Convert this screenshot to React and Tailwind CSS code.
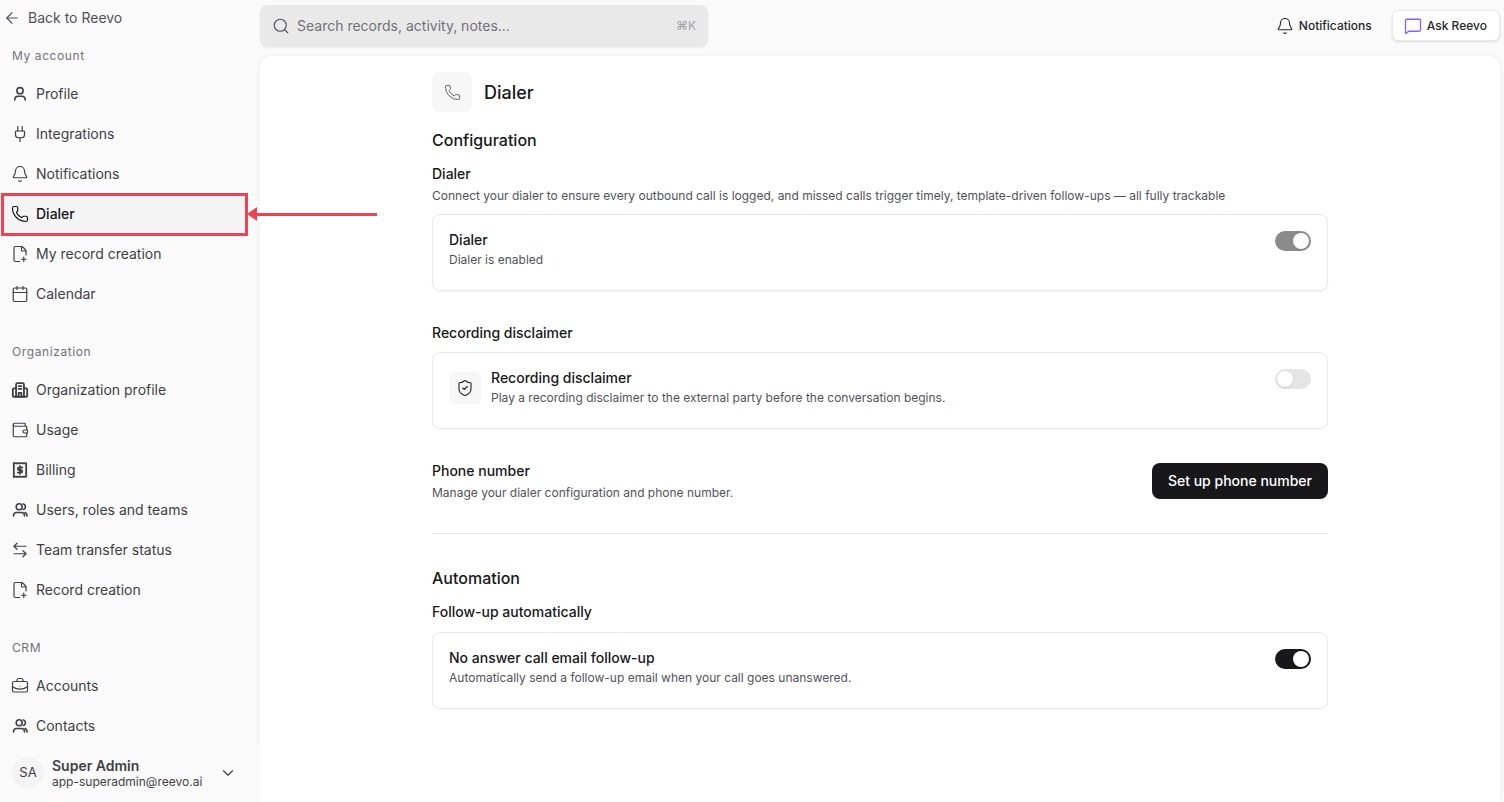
import {
  ArrowLeft, Bell, BriefcaseBusiness, Calendar, ChevronDown, FilePlusCorner, Phone, Plug,
  Search, ShieldCheck, Wallet, ArrowLeftRight, MessageSquare,
} from 'lucide-react'

const OrgIcon = (props) => (
  <svg viewBox="0 0 16 16" fill="none" stroke="currentColor" strokeWidth="1.2" strokeLinecap="round" strokeLinejoin="round" {...props}>
    <path d="M4.5 14V3a1.2 1.2 0 0 1 1.2-1.2h4.6A1.2 1.2 0 0 1 11.5 3v11" />
    <path d="M4.5 6.5H2.6a1 1 0 0 0-1 1V13a1 1 0 0 0 1 1h10.8a1 1 0 0 0 1-1V7.5a1 1 0 0 0-1-1h-1.9" />
    <path d="M6.8 4.5h2.4M6.8 7h2.4M6.8 14v-3.5h2.4V14" />
  </svg>
)

const BillIcon = (props) => (
  <svg viewBox="0 0 16 16" fill="none" stroke="currentColor" strokeWidth="1.2" strokeLinecap="round" strokeLinejoin="round" {...props}>
    <path d="M2.5 2v12M13.5 2v12" />
    <path d="M2.5 2h11M2.5 14h11" strokeDasharray="1 1.2" />
    <path d="M10 5.7H7.2a1.1 1.1 0 0 0 0 2.3h1.6a1.1 1.1 0 0 1 0 2.3H6M8 4.6v6.8" />
  </svg>
)

const PersonIcon = (props) => (
  <svg viewBox="0 0 18 18" fill="none" stroke="currentColor" strokeWidth="1.25" strokeLinecap="round" strokeLinejoin="round" {...props}>
    <circle cx="9" cy="5.7" r="3.1" />
    <path d="M3.8 15v-.5a3.3 3.3 0 0 1 3.3-3.3h3.8a3.3 3.3 0 0 1 3.3 3.3v.5" />
  </svg>
)

const PeopleIcon = (props) => (
  <svg viewBox="0 0 18 18" fill="none" stroke="currentColor" strokeWidth="1.25" strokeLinecap="round" strokeLinejoin="round" {...props}>
    <circle cx="8.2" cy="5.7" r="3" />
    <path d="M2.5 15v-.5a3 3 0 0 1 3-3h5a3 3 0 0 1 3 3v.5" />
    <path d="M12.5 2.9a3 3 0 0 1 0 5.6M16 15v-.6a3 3 0 0 0-2-2.8" />
  </svg>
)

const sections = [
  {
    title: 'My account',
    items: [
      { label: 'Profile', icon: PersonIcon },
      { label: 'Integrations', icon: Plug },
      { label: 'Notifications', icon: Bell },
      { label: 'Dialer', icon: Phone, active: true },
      { label: 'My record creation', icon: FilePlusCorner },
      { label: 'Calendar', icon: Calendar },
    ],
  },
  {
    title: 'Organization',
    items: [
      { label: 'Organization profile', icon: OrgIcon },
      { label: 'Usage', icon: Wallet },
      { label: 'Billing', icon: BillIcon },
      { label: 'Users, roles and teams', icon: PeopleIcon },
      { label: 'Team transfer status', icon: ArrowLeftRight },
      { label: 'Record creation', icon: FilePlusCorner },
    ],
  },
  {
    title: 'CRM',
    items: [
      { label: 'Accounts', icon: BriefcaseBusiness },
      { label: 'Contacts', icon: PeopleIcon },
    ],
  },
]

const NavItem = ({ label, icon: Icon, active }) => (
  <div className={active
    ? 'mr-3 flex h-10 items-center gap-[7px] bg-[#f4f4f5] pl-[11px] text-sm font-medium text-[#18181b]'
    : 'mr-3 flex h-10 items-center gap-[7px] pl-[11px] text-sm text-[#3f3f46]'}>
    <Icon className="size-[18px] shrink-0" strokeWidth={1.6} />
    <span>{label}</span>
  </div>
)

const Toggle = ({ state }) => {
  if (state === 'off') {
    return (
      <div className="flex h-5 w-9 items-center rounded-full bg-[#e5e5e5] p-0.5">
        <div className="size-4 rounded-full bg-white shadow" />
      </div>
    )
  }
  return (
    <div className={state === 'dim'
      ? 'flex h-5 w-9 items-center justify-end rounded-full bg-[#8b8b8b] p-0.5'
      : 'flex h-5 w-9 items-center justify-end rounded-full bg-[#18181b] p-0.5'}>
      <div className="size-4 rounded-full bg-white shadow" />
    </div>
  )
}

const SettingCard = ({ title, text, toggle, icon }) => (
  <div className="flex h-[77px] items-start justify-between rounded-lg border border-[#e8e8e8] px-4 pt-4 shadow-[0_1px_2px_rgba(0,0,0,0.04)]">
    <div className="flex items-start gap-2.5">
      {icon}
      <div>
        <div className="text-sm leading-[18px] font-medium text-[#18181b]">{title}</div>
        <div className="mt-[3px] text-xs leading-4 text-[#52525b]">{text}</div>
      </div>
    </div>
    <Toggle state={toggle} />
  </div>
)

const App = () => {
  return (
    <div className="flex h-screen overflow-hidden bg-[#fafafa] font-['Inter',sans-serif]">
      <aside className="relative flex h-full w-[260px] shrink-0 flex-col">
        <div className="flex h-[38px] items-start pt-[9px] pl-[3px] text-sm leading-[18px] text-[#52525b]">
          <ArrowLeft className="mr-[7px] size-[18px]" strokeWidth={1.5} />
          Back to Reevo
        </div>
        <nav className="min-h-0 flex-1 overflow-hidden">
          {sections.map((section) => (
            <div key={section.title} className="mb-5">
              <div className="flex h-9 items-center pl-3 text-xs tracking-wider text-[#71717a]">{section.title}</div>
              {section.items.map((item) => (
                <NavItem key={item.label} {...item} />
              ))}
            </div>
          ))}
        </nav>
        <div className="absolute right-0 bottom-0 left-0 flex h-[58px] items-center bg-[#fafafa] pr-[23px] pl-3">
          <div className="flex size-8 items-center justify-center rounded-full bg-[#f4f4f5] text-[13px] text-[#3f3f46]">SA</div>
          <div className="ml-2 min-w-0 flex-1">
            <div className="text-sm leading-[17px] font-semibold text-[#3f3f46]">Super Admin</div>
            <div className="text-xs leading-[15px] text-[#3f3f46]">app-superadmin@reevo.ai</div>
          </div>
          <ChevronDown className="size-[18px] text-[#3f3f46]" strokeWidth={1.5} />
        </div>
        {/* red annotation from the docs screenshot */}
        <div className="absolute top-[193px] left-[1px] h-[43px] w-[247px] border-[3px] border-[#ef4354]" />
        <div className="absolute top-[212.5px] left-[252px] h-[3px] w-[125px] bg-[#ef4354]" />
        <div className="absolute top-[207px] left-[247px] h-0 w-0 border-y-[7px] border-r-[10px] border-y-transparent border-r-[#ef4354]" />
      </aside>

      <div className="flex h-full min-w-0 flex-1 flex-col pr-1">
        <header className="flex h-14 shrink-0 items-start justify-between pt-[5px]">
          <div className="flex h-[42px] w-[448px] items-center rounded-lg bg-[#e9e9e9] pr-3 pl-3 shadow-[0_1px_2px_rgba(0,0,0,0.06)]">
            <Search className="size-[18px] text-[#52525b]" strokeWidth={1.5} />
            <span className="ml-[7px] flex-1 text-sm text-[#71717a]">Search records, activity, notes...</span>
            <span className="text-xs text-[#a1a1aa]">⌘K</span>
          </div>
          <div className="flex items-center gap-5 pt-[5px]">
            <div className="flex items-center gap-[5px] text-xs font-medium text-[#27272a]">
              <Bell className="size-[18px]" strokeWidth={1.5} />
              Notifications
            </div>
            <div className="flex h-[31px] items-center gap-[5px] rounded-md border border-[#e8e8e8] bg-white pr-3 pl-[11px] text-xs font-medium text-[#27272a] shadow-sm">
              <MessageSquare className="size-[18px] text-[#8b5cf6]" strokeWidth={1.75} />
              Ask Reevo
            </div>
          </div>
        </header>

        <main className="min-h-0 flex-1 rounded-t-xl bg-white shadow-[0_0_6px_rgba(0,0,0,0.05)]">
          <div className="mx-auto max-w-4xl pt-4">
            <div className="flex items-center gap-3">
              <div className="flex size-10 items-center justify-center rounded-lg bg-[#f7f7f7] text-[#52525b]">
                <Phone className="size-[17px]" strokeWidth={1.25} />
              </div>
              <h1 className="mt-0.5 text-lg font-medium text-[#18181b]">Dialer</h1>
            </div>

            <h2 className="mt-4 text-base leading-6 font-medium text-[#18181b]">Configuration</h2>
            <h3 className="mt-[13px] text-sm leading-[18px] font-medium text-[#18181b]">Dialer</h3>
            <p className="mt-[5px] text-xs leading-4 text-[#52525b]">
              Connect your dialer to ensure every outbound call is logged, and missed calls trigger timely, template-driven follow-ups — all fully trackable
            </p>
            <div className="mt-[10px]">
              <SettingCard title="Dialer" text="Dialer is enabled" toggle="dim" />
            </div>

            <h3 className="mt-[33px] text-sm leading-[18px] font-medium text-[#18181b]">Recording disclaimer</h3>
            <div className="mt-[10px]">
              <SettingCard
                title="Recording disclaimer"
                text="Play a recording disclaimer to the external party before the conversation begins."
                toggle="off"
                icon={
                  <div className="mt-[3px] flex size-8 shrink-0 items-center justify-center rounded-md bg-[#f7f7f7] text-[#27272a]">
                    <ShieldCheck className="size-[18px]" strokeWidth={1.5} />
                  </div>
                }
              />
            </div>

            <div className="mt-[33px] flex items-start justify-between">
              <div>
                <div className="text-sm leading-[18px] font-medium text-[#18181b]">Phone number</div>
                <div className="mt-[5px] text-xs leading-4 text-[#52525b]">Manage your dialer configuration and phone number.</div>
              </div>
              <button className="mt-px flex h-9 items-center rounded-lg bg-[#18181b] px-4 text-sm font-medium text-white">Set up phone number</button>
            </div>

            <div className="mt-[32px] h-px bg-[#e8e8e8]" />

            <h2 className="mt-[32px] text-base leading-6 font-medium text-[#18181b]">Automation</h2>
            <h3 className="mt-[13px] text-sm leading-[18px] font-medium text-[#18181b]">Follow-up automatically</h3>
            <div className="mt-[11px]">
              <SettingCard title="No answer call email follow-up" text="Automatically send a follow-up email when your call goes unanswered." toggle="on" />
            </div>
          </div>
        </main>
      </div>
    </div>
  )
}

export default App
